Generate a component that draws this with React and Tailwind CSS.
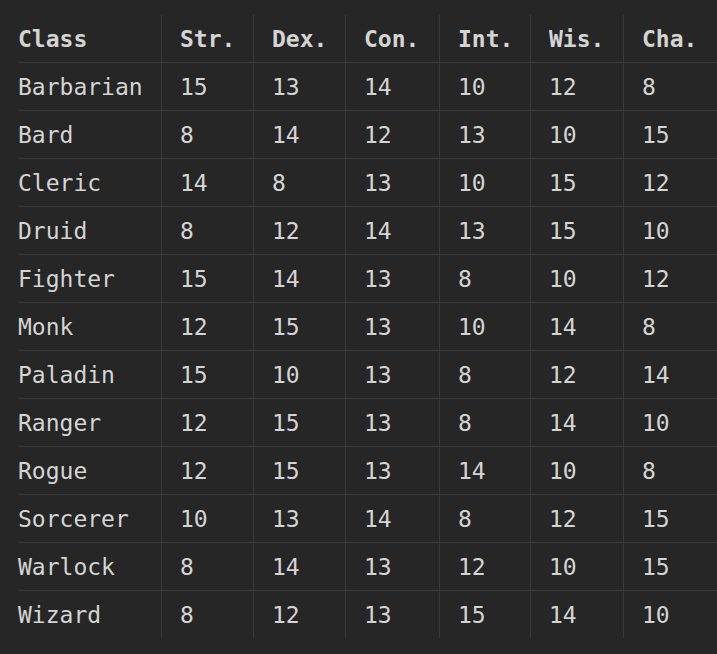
const headers = ["Class", "Str.", "Dex.", "Con.", "Int.", "Wis.", "Cha."];

const rows = [
  ["Barbarian", 15, 13, 14, 10, 12, 8],
  ["Bard", 8, 14, 12, 13, 10, 15],
  ["Cleric", 14, 8, 13, 10, 15, 12],
  ["Druid", 8, 12, 14, 13, 15, 10],
  ["Fighter", 15, 14, 13, 8, 10, 12],
  ["Monk", 12, 15, 13, 10, 14, 8],
  ["Paladin", 15, 10, 13, 8, 12, 14],
  ["Ranger", 12, 15, 13, 8, 14, 10],
  ["Rogue", 12, 15, 13, 14, 10, 8],
  ["Sorcerer", 10, 13, 14, 8, 12, 15],
  ["Warlock", 8, 14, 13, 12, 10, 15],
  ["Wizard", 8, 12, 13, 15, 14, 10],
];

// column widths, px
const widths = ["w-[143px]", "w-[92px]", "w-[92px]", "w-[94px]", "w-[91px]", "w-[93px]", "w-[83px]"];

function Cell({ i, children }) {
  return (
    <div
      className={`${widths[i]} shrink-0 flex items-center pt-[2px] ${
        i === 0 ? "pl-0" : "pl-[18px] border-l border-[#3a3a3a]"
      }`}
    >
      {children}
    </div>
  );
}

export default function App() {
  return (
    <div
      className="w-[717px] h-[654px] bg-[#262626] text-[#d4d4d4] pl-[18px] pt-[15px] overflow-hidden"
      style={{ fontFamily: '"DejaVu Sans Mono", monospace' }}
    >
      <div className="flex flex-col text-[23px] leading-none">
        {/* Header */}
        <div className="flex h-[47px] font-bold">
          {headers.map((h, i) => (
            <Cell key={h} i={i}>
              {h}
            </Cell>
          ))}
        </div>

        {/* Rows */}
        {rows.map((r) => (
          <div key={r[0]} className="flex h-[48px] border-t border-[#3a3a3a]">
            {r.map((v, i) => (
              <Cell key={i} i={i}>
                {v}
              </Cell>
            ))}
          </div>
        ))}
      </div>
    </div>
  );
}
